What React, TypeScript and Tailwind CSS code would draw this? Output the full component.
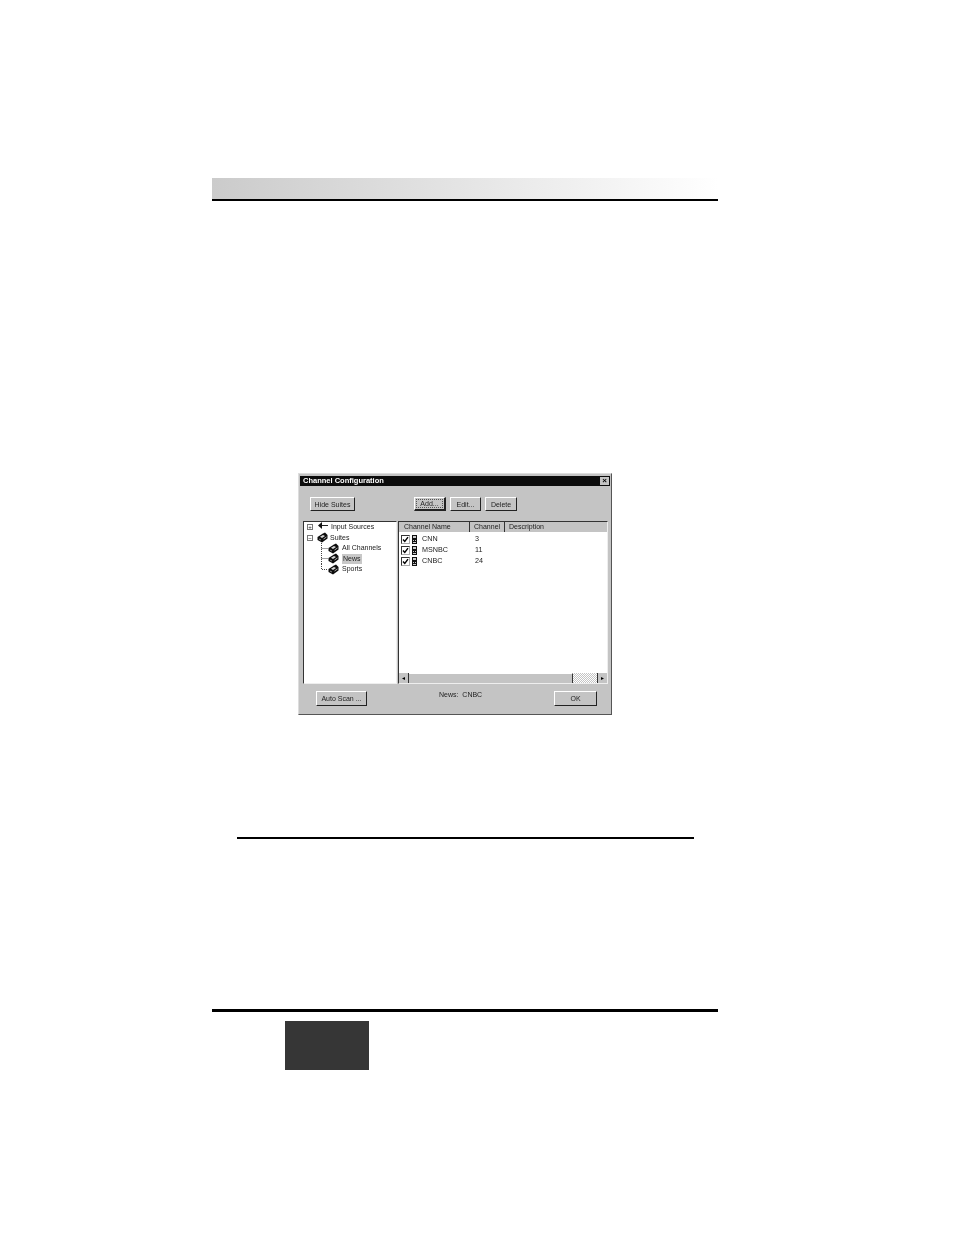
function SuiteIcon() {
  return (
    <svg width="11" height="11" viewBox="0 0 11 11" className="shrink-0">
      <path d="M0.5 5 L6 1.5 L8 0.5 L10.5 3 L10.5 6.5 L5 10.5 L0.5 8 Z" fill="#0c0c0c" />
      <path d="M3 4.8 L6 3 L8 4 L5 6 Z" fill="#d8d8d8" />
      <path d="M6.5 7 L9.5 5" stroke="#aaa" strokeWidth="1" />
      <path d="M2 7 L4 8" stroke="#888" strokeWidth="1" />
    </svg>
  )
}

function DeviceIcon() {
  return (
    <svg width="5" height="9" viewBox="0 0 5 9" className="shrink-0">
      <rect width="5" height="9" fill="#111" />
      <rect x="1" y="1" width="3" height="2" fill="#ccc" />
      <rect x="1" y="5" width="1" height="1" fill="#ccc" />
      <rect x="3" y="5" width="1" height="1" fill="#ccc" />
      <rect x="1" y="7" width="3" height="1" fill="#ccc" />
    </svg>
  )
}

function Check() {
  return (
    <span className="flex w-[9px] h-[9px] shrink-0 items-center justify-center bg-white border border-t-[#333] border-l-[#333] border-r-[#aaa] border-b-[#aaa]">
      <svg width="7" height="7" viewBox="0 0 7 7">
        <path d="M1 3.5 L2.8 5.5 L6 1.2" fill="none" stroke="#000" strokeWidth="1.4" />
      </svg>
    </span>
  )
}

function Btn({ label, w, focus }: { label: string; w: string; focus?: boolean }) {
  return (
    <div
      className={`${w} h-full flex items-center justify-center bg-[#c4c4c4] border border-t-white border-l-white border-r-[#222] border-b-[#222] text-[7px] leading-none text-[#222] ${
        focus ? "border-r-2 border-b-2 p-[1px]" : ""
      }`}
    >
      <span className={focus ? "w-full h-full flex items-center justify-center border border-dotted border-[#555] leading-none" : ""}>{label}</span>
    </div>
  )
}

function Connector({ last }: { last?: boolean }) {
  return (
    <svg width="7" height="11" viewBox="0 0 7 11" className="shrink-0">
      <path d={last ? "M0.5 0 V5.5 H7" : "M0.5 0 V11 M0.5 5.5 H7"} fill="none" stroke="#444" strokeWidth="1" strokeDasharray="1 1" />
    </svg>
  )
}

function TreeRow({ sign, label, icon, selected, last, textGap }: { sign?: string; label: string; icon: React.ReactNode; selected?: boolean; last?: boolean; textGap: string }) {
  return (
    <div className={`flex items-center h-[10.5px] ${sign ? "pl-[3px]" : "pl-[17px]"}`}>
      {sign ? (
        <span className="w-[6px] h-[6px] mr-[4px] shrink-0 flex items-center justify-center border border-[#777] text-[6px] leading-none text-[#222]">
          {sign}
        </span>
      ) : (
        <Connector last={last} />
      )}
      {icon}
      <span className={`${textGap} text-[7px] text-[#222] ${selected ? "bg-[#c8c8c8] px-[1px]" : ""}`}>{label}</span>
    </div>
  )
}

const channels = [
  { name: "CNN", num: "3" },
  { name: "MSNBC", num: "11" },
  { name: "CNBC", num: "24" },
]

function ChannelDialog() {
  return (
    <div className="w-[314px] h-[242px] ml-[298px] mt-[272px] flex flex-col bg-[#c4c4c4] border border-[#555] border-t-[#ddd] border-l-[#ddd] p-[1px] font-['Liberation_Sans',sans-serif] blur-[0.3px]">
      <div className="h-[10px] mt-[1px] flex items-center justify-between bg-[#0c0c0c] pl-[3px] pr-[1px]">
        <span className="text-[7.5px] font-bold text-white leading-none">Channel Configuration</span>
        <span className="w-[9px] h-[8px] flex items-center justify-center bg-[#c4c4c4] text-[8px] font-bold leading-none text-black">×</span>
      </div>

      <div className="flex mt-[11px] ml-[10px] h-[14px]">
        <Btn label="Hide Suites" w="w-[45px]" />
        <div className="flex gap-[4px] ml-[59px]">
          <Btn label="Add..." w="w-[32px]" focus />
          <Btn label="Edit..." w="w-[31px]" />
          <Btn label="Delete" w="w-[32px]" />
        </div>
      </div>

      <div className="flex mt-[10px] ml-[3px] mr-[2px] h-[163px]">
        <div className="w-[94px] bg-white border border-t-[#333] border-l-[#333] border-r-[#eee] border-b-[#eee]">
          <TreeRow sign="+" label="Input Sources" textGap="ml-[3px]" icon={
            <svg width="11" height="8" viewBox="0 0 11 8" className="shrink-0 -mt-[3px]">
              <path d="M4 3.5 H11" stroke="#222" strokeWidth="1" />
              <path d="M5 0 V7 L1 3.5 Z" fill="#111" />
            </svg>
          } />
          <TreeRow sign="−" label="Suites" textGap="ml-[2px]" icon={<SuiteIcon />} />
          <TreeRow label="All Channels" textGap="ml-[3px]" icon={<SuiteIcon />} />
          <TreeRow label="News" textGap="ml-[3px]" icon={<SuiteIcon />} selected />
          <TreeRow label="Sports" textGap="ml-[3px]" icon={<SuiteIcon />} last />
        </div>

        <div className="flex-1 ml-[1px] flex flex-col bg-white border border-t-[#333] border-l-[#333] border-r-[#eee] border-b-[#eee]">
          <div className="flex h-[10px] shrink-0 bg-[#c4c4c4] text-[7px] text-[#222]">
            <div className="w-[71px] pl-[5px] flex items-center border-r border-[#333]">Channel Name</div>
            <div className="w-[35px] pl-[4px] flex items-center border-r border-[#333]">Channel</div>
            <div className="flex-1 pl-[4px] flex items-center">Description</div>
          </div>
          <div className="flex-1 pt-[2px] pl-[2px]">
            {channels.map((c) => (
              <div key={c.name} className="flex items-center h-[11px] text-[7.2px] text-[#222]">
                <Check />
                <span className="ml-[2px]"><DeviceIcon /></span>
                <span className="ml-[5px] w-[53px]">{c.name}</span>
                <span>{c.num}</span>
              </div>
            ))}
          </div>
          <div className="flex h-[10px] shrink-0 bg-[#c4c4c4] items-stretch">
            <div className="w-[10px] flex items-center justify-center bg-[#c4c4c4] border-r border-[#333] text-[6px] leading-none text-black">◂</div>
            <div className="flex-1 border-r border-[#333] border-t border-t-white" />
            <div className="w-[24px] bg-[repeating-conic-gradient(#c4c4c4_0_25%,#ffffff_0_50%)] bg-[length:2px_2px]" />
            <div className="w-[10px] flex items-center justify-center border-l border-[#333] text-[6px] leading-none text-black">▸</div>
          </div>
        </div>
      </div>

      <div className="flex mt-[7px] ml-[16px] h-[15px]">
        <Btn label="Auto Scan ..." w="w-[51px]" />
        <span className="ml-[72px] -mt-[1px] text-[7px] text-[#222] whitespace-pre">News:  CNBC</span>
        <div className="ml-auto mr-[13px]">
          <Btn label="OK" w="w-[43px]" />
        </div>
      </div>
    </div>
  )
}

export default function App() {
  return (
    <main className="w-[954px] h-[1235px] bg-white overflow-hidden pt-[178px]">
      <div className="ml-[212px] w-[506px] h-[23px] bg-gradient-to-r from-[#cbcbcb] to-white border-b-2 border-black" />

      <ChannelDialog />

      <div className="ml-[237px] w-[457px] h-[2px] mt-[122px] bg-black" />

      <div className="ml-[212px] w-[506px] h-[3px] mt-[170px] bg-black" />

      <div className="ml-[285px] w-[84px] h-[49px] mt-[9px] bg-[#363636]" />
    </main>
  )
}
